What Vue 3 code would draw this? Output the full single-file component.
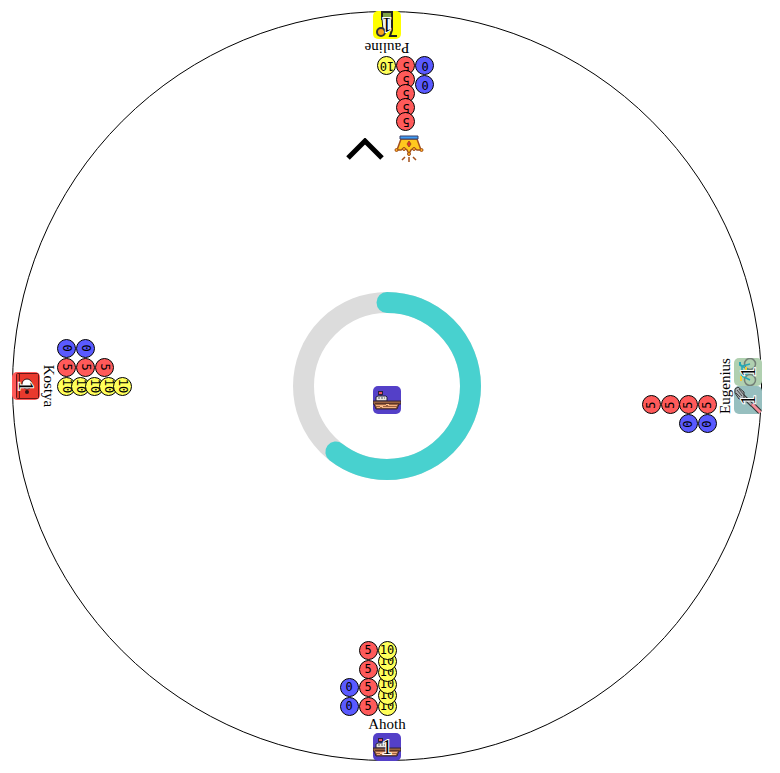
<script setup>
import { h } from 'vue'

const ring = { radius: 83.5, progress: 0.604 }
const circumference = 2 * Math.PI * ring.radius

const seats = [
  { name: 'Ahoth', side: 'south', cards: ['ship'], chips: { 0: 2, 5: 4, 10: 6 } },
  { name: 'Kostya', side: 'west', cards: ['book'], chips: { 0: 2, 5: 3, 10: 5 } },
  { name: 'Pauline', side: 'north', cards: ['unicycle'], chips: { 0: 2, 5: 5, 10: 1 }, leader: true },
  { name: 'Eugenius', side: 'east', cards: ['fork', 'bike'], chips: { 0: 2, 5: 4, 10: 0 } },
]
const values = [0, 5, 10]

// Each picture is a list of [tag, attributes], turned by `turn` degrees inside its tile.
const pictures = {
  ship: {
    turn: 0,
    shapes: [
      ['path', { d: 'M8 5v5', stroke: '#27233a' }],
      ['path', { d: 'M5 5h5v4h-5z', fill: '#27233a' }],
      ['path', { d: 'M6 6h3v2h-3z', fill: '#ef5360' }],
      ['path', { d: 'M3 15v-4l2-1h8l1 1v4z', fill: '#e8e6e4', stroke: '#27233a' }],
      ['path', { d: 'M5 12h2m1 0h2m1 0h1', stroke: '#55565d' }],
      ['path', { d: 'M0 15h28v3h-2l-2 5h-21l-2-5h-1z', fill: '#9a6240', stroke: '#302235' }],
      ['path', { d: 'M2 17.5h24', stroke: '#5d3529' }],
      ['path', { d: 'M3 19.5h10m2 0h9M4 21.5h3m2 0h14', stroke: '#f5b080' }],
      ['path', { d: 'M13 18h3v1h-3zM7 20h3v1h-3z', fill: '#ffc38c' }],
    ],
  },
  book: {
    turn: -90,
    shapes: [
      ['rect', { x: 4.5, y: 1.5, width: 22, height: 25, rx: 1, fill: '#e9392d', stroke: '#671818' }],
      ['path', { d: 'M7.5 1v26', stroke: '#671818' }],
      ['circle', { cx: 15, cy: 12, r: 5, fill: '#fff', stroke: '#331414' }],
      ['circle', { cx: 15, cy: 20, r: 2, fill: '#331414' }],
    ],
  },
  unicycle: {
    turn: 180,
    shapes: [
      ['path', { d: 'M9 1h10v7h-10z', fill: '#7fa245', stroke: '#222', 'stroke-width': 2 }],
      ['path', { d: 'M9 8h10v11h-9z', fill: '#e9f3f5', stroke: '#222' }],
      ['circle', { cx: 8, cy: 21, r: 4, fill: '#f7a51d', stroke: '#333', 'stroke-width': 2 }],
      ['path', { d: 'M19 8v11l-2 6h7M11 20l4-2', stroke: '#222', 'stroke-width': 2 }],
    ],
  },
  fork: {
    turn: 90,
    shapes: [
      ['path', { d: 'M9 10l9 9', stroke: '#333', 'stroke-width': 4 }],
      ['path', { d: 'M9 10l9 9', stroke: '#a9b0b3', 'stroke-width': 2 }],
      ['path', { d: 'M1 3l3-2 6 5v7h-5l-4-6z', fill: '#a9b0b3', stroke: '#333' }],
      ['path', { d: 'M3 4l5 6M5 3l5 6M2 7l4 4', stroke: '#444' }],
      ['path', { d: 'M18 18l9 9', stroke: '#333', 'stroke-width': 5 }],
      ['path', { d: 'M18 18l9 9', stroke: '#f78f9a', 'stroke-width': 3 }],
    ],
  },
  bike: {
    turn: 90,
    shapes: [
      ['circle', { cx: 16, cy: 6, r: 5.5, stroke: '#748078', 'stroke-width': 1.5 }],
      ['circle', { cx: 16, cy: 22, r: 5.5, stroke: '#748078', 'stroke-width': 1.5 }],
      ['path', { d: 'M16 6l-8 2v10l8 4M8 8l9 6-9 4', stroke: '#24a6b5', 'stroke-width': 1.5 }],
      ['path', { d: 'M8 8l-2-1v-3', stroke: '#24a6b5', 'stroke-width': 2 }],
      ['path', { d: 'M7 18v5M16 14h3M12 9v4', stroke: '#f3cb38', 'stroke-width': 2 }],
    ],
  },
}

const Picture = ({ kind }) =>
  h('svg', { viewBox: '0 0 28 28', width: 28, height: 28, fill: 'none', 'aria-hidden': 'true' }, [
    h('g', { transform: `rotate(${pictures[kind].turn} 14 14)` },
      pictures[kind].shapes.map(([tag, attrs]) => h(tag, attrs))),
  ])
</script>

<template>
  <main class="board">
    <div class="centre">
      <svg class="ring" viewBox="0 0 190 190" aria-hidden="true">
        <circle class="track" cx="95" cy="95" :r="ring.radius" />
        <circle
          class="progress"
          cx="95"
          cy="95"
          :r="ring.radius"
          transform="rotate(-90 95 95)"
          :stroke-dasharray="`${circumference * ring.progress} ${circumference}`"
        />
      </svg>
      <div class="card ship drawn"><Picture kind="ship" /></div>
    </div>

    <section v-for="seat in seats" :key="seat.name" class="seat" :class="seat.side">
      <div v-if="seat.leader" class="markers">
        <svg class="crown" viewBox="0 0 30 28" fill="none" aria-hidden="true">
          <g transform="rotate(180 15 14)" stroke="#a3501c">
            <path d="M7 4h16l4 11-4 0-3-2-3 2-2 4-2-4-3-2-3 2-4 0z" fill="#ffc81e" stroke-width="1.5" />
            <circle cx="2.5" cy="15" r="1.5" fill="#ffb020" />
            <circle cx="10" cy="14" r="1.5" fill="#ffb020" />
            <circle cx="15" cy="19" r="1.5" fill="#ffb020" />
            <circle cx="20" cy="14" r="1.5" fill="#ffb020" />
            <circle cx="27.5" cy="15" r="1.5" fill="#ffb020" />
            <path d="M6 1h18v3h-18z" fill="#3f9cf5" stroke="#3a3f66" />
            <path d="M15 6l2 3-2 3-2-3z" fill="#e5302c" />
            <path d="M15 22v5M11 22l-3 3M19 22l3 3" stroke-width="1.5" />
          </g>
        </svg>
        <svg class="chevron" viewBox="0 0 38 22" aria-hidden="true"><path d="M2 2l17 17 17-17" /></svg>
      </div>
      <div class="stacks">
        <div v-for="value in values" :key="value" class="stack">
          <div v-for="n in seat.chips[value]" :key="n" class="slot">
            <span class="chip" :class="`chip-${value}`">{{ value }}</span>
          </div>
        </div>
      </div>
      <div class="name">{{ seat.name }}</div>
      <div class="hand">
        <div v-for="card in seat.cards" :key="card" class="card" :class="card">
          <Picture :kind="card" />
          <span class="count">1</span>
        </div>
      </div>
    </section>
  </main>
</template>

<style>
body {
  margin: 0;
  background: #fff;
}
</style>

<style scoped>
.board {
  position: relative;
  box-sizing: border-box;
  margin: 11px 18px 12px 12px;
  aspect-ratio: 1;
  border: 1px solid #000;
  border-radius: 50%;
  display: grid;
  place-items: center;
  color: #000;
  font-family: "Liberation Serif", serif;
}
.centre {
  display: grid;
  place-items: center;
}
.centre > * {
  grid-area: 1 / 1;
}
.ring {
  width: 190px;
  height: 190px;
  fill: none;
  stroke-width: 21;
}
.track {
  stroke: #dcdcdc;
}
.progress {
  stroke: #48d1cf;
  stroke-linecap: round;
}
.drawn {
  margin-top: 28px;
}
.seat {
  position: absolute;
  inset: -1px;
  display: flex;
  flex-direction: column;
  align-items: center;
  justify-content: flex-end;
  pointer-events: none;
}
.west {
  transform: rotate(90deg);
}
.north {
  transform: rotate(180deg);
}
.east {
  transform: rotate(-90deg);
}
.markers {
  display: flex;
  align-items: center;
  gap: 10px;
  padding: 0 0 4px 4px;
}
.crown {
  width: 30px;
  height: 28px;
}
.chevron {
  width: 38px;
  height: 22px;
  fill: none;
  stroke: #000;
  stroke-width: 5;
}
.stacks {
  display: grid;
  grid-template-columns: repeat(5, 19px);
  height: 75px;
}
.stack {
  display: flex;
  flex-direction: column-reverse;
  min-height: 0;
}
.slot {
  display: flex;
  align-items: flex-end;
  flex: 0 1 19px;
  min-height: 0;
}
.slot:last-child {
  flex-shrink: 0;
}
.chip {
  position: relative;
  box-sizing: border-box;
  flex: none;
  width: 19px;
  height: 19px;
  border: 1px solid #000;
  border-radius: 50%;
  font: 12px/17px "DejaVu Sans Mono", monospace;
  text-align: center;
}
.chip-0 {
  background: #5a5aff;
}
.chip-5 {
  background: #ff5a5a;
}
.chip-10 {
  background: #ffff5a;
}
.name {
  font-size: 15px;
  line-height: 17px;
}
.hand {
  display: flex;
}
.card {
  display: grid;
  place-items: center;
  width: 28px;
  height: 28px;
  border-radius: 5px;
  overflow: hidden;
}
.card > * {
  grid-area: 1 / 1;
}
.count {
  font-size: 20px;
  line-height: 28px;
  -webkit-text-stroke: 2px #fff;
  paint-order: stroke fill;
}
.ship {
  background: #5440c8;
}
.book {
  background: #ff5a5a;
}
.unicycle {
  background: #ff0;
}
.fork {
  background: #97bfbf;
}
.bike {
  background: #b0d0b0;
}
</style>
